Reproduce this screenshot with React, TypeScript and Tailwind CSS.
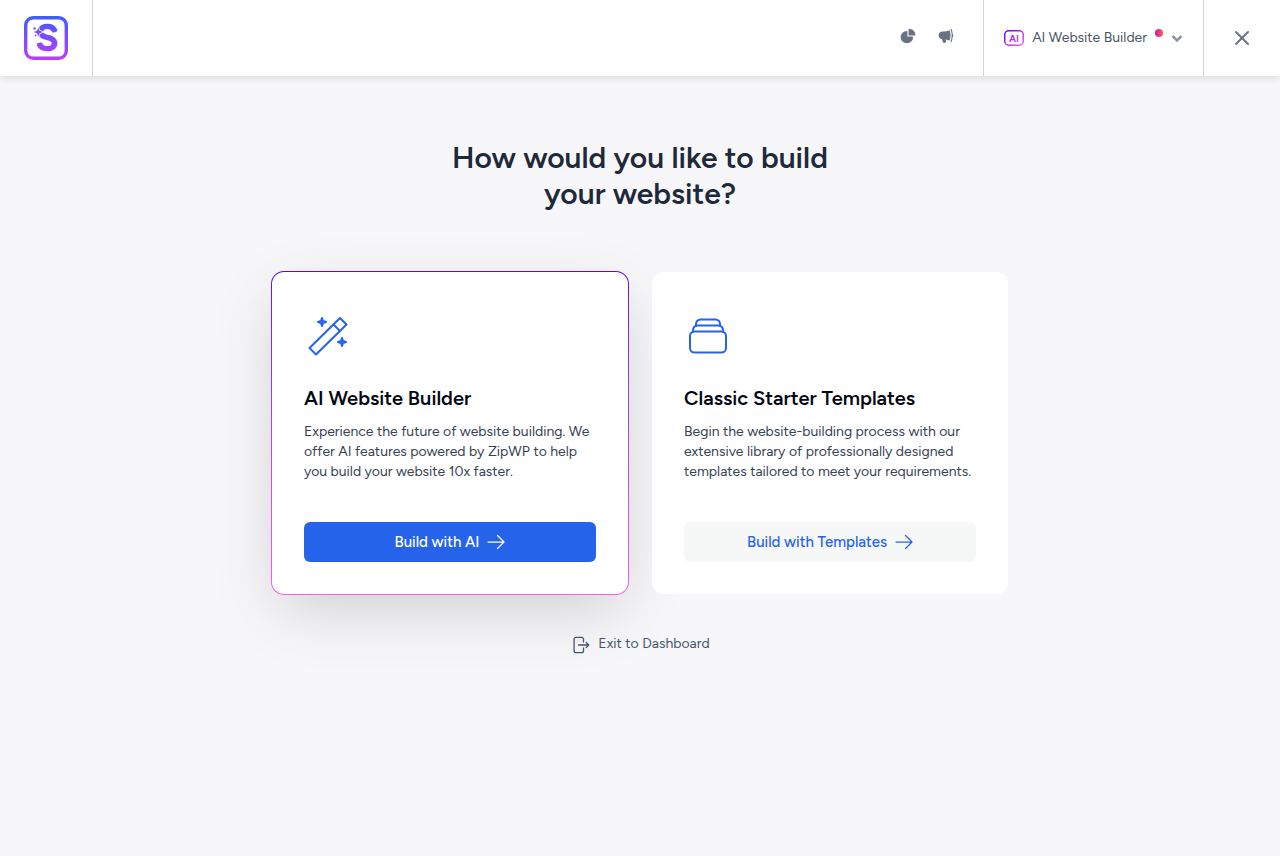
import type { ReactNode } from "react";
import { HiChartPie, HiMegaphone } from "react-icons/hi2";
import { X } from "lucide-react";

function Logo() {
  return (
    <svg width="44" height="44" viewBox="0 0 44 44" role="img" aria-label="Starter Templates">
      <defs>
        <linearGradient id="logo" gradientUnits="userSpaceOnUse" x1="22" y1="0" x2="22" y2="44">
          <stop offset="0" stopColor="#3c5cff" />
          <stop offset="1" stopColor="#c03bff" />
        </linearGradient>
      </defs>
      <rect x="1.7" y="1.7" width="40.6" height="40.6" rx="7.5" fill="none" stroke="url(#logo)" strokeWidth="3.4" />
      <text
        x="23"
        y="34"
        textAnchor="middle"
        fontSize="35"
        fill="url(#logo)"
        stroke="url(#logo)"
        strokeWidth="2.6"
        strokeLinejoin="round"
        className="font-['Figtree','Lato',sans-serif] font-normal"
      >
        S
      </text>
      <path
        d="M14.3 11.5l1.3 3.2 3.2 1.3-3.2 1.3-1.3 3.2-1.3-3.2-3.2-1.3 3.2-1.3z"
        fill="url(#logo)"
        stroke="#fff"
        strokeWidth="1.6"
        paintOrder="stroke"
      />
      <circle cx="10.6" cy="12.4" r="1.2" fill="url(#logo)" />
      <circle cx="11.6" cy="19.4" r="0.9" fill="url(#logo)" />
    </svg>
  );
}

function AiBadge() {
  return (
    <svg width="20" height="16" viewBox="0 0 20 16" aria-hidden="true">
      <defs>
        <linearGradient id="badge" gradientUnits="userSpaceOnUse" x1="3" y1="0" x2="16" y2="16">
          <stop offset="0" stopColor="#6a00f4" />
          <stop offset="1" stopColor="#ef5be8" />
        </linearGradient>
      </defs>
      <rect x="0.75" y="0.75" width="18.5" height="14.5" rx="4" fill="none" stroke="url(#badge)" strokeWidth="1.5" />
      <text
        x="10"
        y="11.5"
        textAnchor="middle"
        fontSize="10"
        fill="url(#badge)"
        className="font-['Figtree','Lato',sans-serif] font-bold"
      >
        AI
      </text>
    </svg>
  );
}

function WandIcon() {
  return (
    <svg
      width="48"
      height="48"
      viewBox="0 0 48 48"
      fill="none"
      stroke="currentColor"
      strokeWidth="2"
      strokeLinecap="round"
      strokeLinejoin="round"
      aria-hidden="true"
    >
      <path d="M36 6l6.5 6.5L12 42.500l-6.500-6.500z" />
      <path d="M29.5 12.500L36 19" />
      <path fill="currentColor" fillOpacity="0.6" d="M18 6l1 3 3 1-3 1-1 3-1-3-3-1 3-1z" />
      <path fill="currentColor" fillOpacity="0.6" d="M38 26l1 3 3 1-3 1-1 3-1-3-3-1 3-1z" />
    </svg>
  );
}

function StackIcon() {
  return (
    <svg
      width="48"
      height="48"
      viewBox="0 0 48 48"
      fill="none"
      stroke="currentColor"
      strokeWidth="2"
      strokeLinecap="round"
      strokeLinejoin="round"
      aria-hidden="true"
    >
      <rect x="6" y="19.5" width="36" height="21" rx="4.5" />
      <path d="M9 19.7V18a4.5 4.5 0 0 1 4.5-4.5h21A4.5 4.5 0 0 1 39 18v1.7" />
      <path d="M12 13.7V12a4.5 4.5 0 0 1 4.5-4.5h15A4.5 4.5 0 0 1 36 12v1.7" />
    </svg>
  );
}

function ArrowIcon() {
  return (
    <svg
      width="18"
      height="16"
      viewBox="0 0 18 16"
      fill="none"
      stroke="currentColor"
      strokeWidth="1.25"
      strokeLinecap="round"
      strokeLinejoin="round"
      aria-hidden="true"
    >
      <path d="M1 8h16M10.5 1.5L17 8l-6.5 6.5" />
    </svg>
  );
}

function ExitIcon() {
  return (
    <svg
      width="20"
      height="20"
      viewBox="0 0 20 20"
      fill="none"
      stroke="currentColor"
      strokeWidth="1.3"
      strokeLinecap="round"
      strokeLinejoin="round"
      aria-hidden="true"
    >
      <path d="M13.5 8V5.200A1.900 1.900 0 0 0 11.600 3.300H6A1.900 1.900 0 0 0 4.100 5.200v11.600A1.900 1.900 0 0 0 6 18.700h5.600a1.900 1.900 0 0 0 1.900-1.900V14" />
      <path d="M8.500 11h10M16.200 8.500L18.700 11l-2.500 2.500" />
    </svg>
  );
}

type OptionProps = {
  icon: ReactNode;
  title: string;
  description: string;
  action: string;
  primary?: boolean;
};

function OptionCard({ icon, title, description, action, primary }: OptionProps) {
  return (
    <div
      className={
        primary
          ? "-m-px rounded-[13px] bg-linear-to-b from-[#5a03ef] to-[#ff5ce0] p-px shadow-[0_20px_64px_-8px_rgba(0,0,0,0.17)]"
          : "relative"
      }
    >
      <section className="flex h-full flex-col rounded-xl bg-white px-8 pt-10 pb-8">
        <div className="text-[#2563eb]">{icon}</div>
        <h2 className="mt-6 text-xl leading-7 font-semibold text-gray-950">{title}</h2>
        <p className="mt-2.5 mb-10 text-sm leading-5 text-gray-700">{description}</p>
        <button
          type="button"
          className={
            primary
              ? "mt-auto flex h-10 w-full cursor-pointer items-center justify-center gap-2 rounded-md bg-[#2563eb] text-[15px] font-medium text-white"
              : "mt-auto flex h-10 w-full cursor-pointer items-center justify-center gap-2 rounded-md bg-[#f6f8f8] text-[15px] font-medium text-[#2563eb]"
          }
        >
          {action}
          <ArrowIcon />
        </button>
      </section>
    </div>
  );
}

export default function App() {
  return (
    <div className="min-h-screen bg-[#f7f7fa] font-['Figtree','Lato',sans-serif]">
      <header className="flex h-[76px] items-stretch bg-white shadow-[0_2px_8px_rgba(0,0,0,0.12)]">
        <a href="#" className="flex items-center border-r border-gray-300 px-6">
          <Logo />
        </a>
        <div className="ml-auto flex items-center gap-5 pr-7 pb-1 text-gray-500">
          <button type="button" aria-label="Usage" className="cursor-pointer">
            <HiChartPie className="size-[18px]" />
          </button>
          <button type="button" aria-label="What's new" className="cursor-pointer">
            <HiMegaphone className="size-[18px]" />
          </button>
        </div>
        <button
          type="button"
          className="flex cursor-pointer items-center gap-2 border-x border-gray-300 px-5 text-sm text-gray-600"
        >
          <AiBadge />
          AI Website Builder
          <span className="mb-2.5 size-2 rounded-full bg-linear-to-r from-[#c8009c] to-[#ff5a4f]" />
          <svg
            width="12"
            height="14"
            viewBox="0 0 12 14"
            fill="none"
            stroke="#9196a1"
            strokeWidth="2.5"
            aria-hidden="true"
          >
            <path d="M1.500 5L6 9.500 10.500 5" />
          </svg>
        </button>
        <button
          type="button"
          aria-label="Close"
          className="flex w-[76px] cursor-pointer items-center justify-center text-gray-500"
        >
          <X className="size-6" />
        </button>
      </header>

      <main className="mx-auto flex max-w-[768px] flex-col items-center px-4 pt-16 pb-10">
        <h1 className="text-center text-3xl leading-9 font-semibold text-gray-800">
          How would you like to build
          <br />
          your website?
        </h1>

        <div className="mt-[60px] grid w-full gap-6 sm:grid-cols-2">
          <OptionCard
            primary
            icon={<WandIcon />}
            title="AI Website Builder"
            description="Experience the future of website building. We offer AI features powered by ZipWP to help you build your website 10x faster."
            action="Build with AI"
          />
          <OptionCard
            icon={<StackIcon />}
            title="Classic Starter Templates"
            description="Begin the website-building process with our extensive library of professionally designed templates tailored to meet your requirements."
            action="Build with Templates"
          />
        </div>

        <a href="#" className="relative mt-10 flex items-center gap-2 text-sm text-slate-600">
          <ExitIcon />
          Exit to Dashboard
        </a>
      </main>
    </div>
  );
}
